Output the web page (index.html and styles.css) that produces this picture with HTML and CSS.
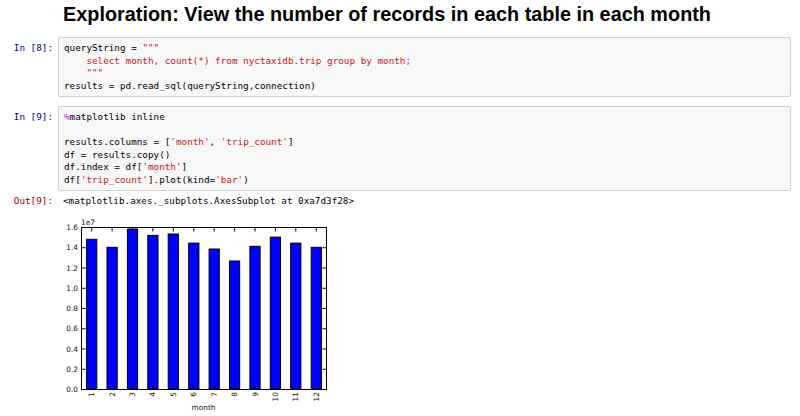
FILE: index.html
```html
<!DOCTYPE html>
<html>
<head>
<meta charset="utf-8">
<link rel="stylesheet" href="styles.css">
</head>
<body>
<div class="notebook">
  <div class="cell md">
    <div class="prompt"></div>
    <h2 class="title">Exploration: View the number of records in each table in each month</h2>
  </div>

  <div class="cell code">
    <div class="prompt in">In&nbsp;[8]:</div>
    <pre class="input">queryString = <span class="s">"""</span>
<span class="s">    select month, count(*) from nyctaxidb.trip group by month;</span>
<span class="s">    """</span>
results = pd.read_sql(queryString,connection)</pre>
  </div>

  <div class="cell code">
    <div class="prompt in">In&nbsp;[9]:</div>
    <pre class="input"><span class="m">%</span>matplotlib inline

results.columns = [<span class="s">'month'</span>, <span class="s">'trip_count'</span>]
df = results.copy()
df.index = df[<span class="s">'month'</span>]
df[<span class="s">'trip_count'</span>].plot(kind=<span class="s">'bar'</span>)</pre>
  </div>

  <div class="cell out">
    <div class="prompt outp">Out[9]:</div>
    <pre class="output">&lt;matplotlib.axes._subplots.AxesSubplot at 0xa7d3f28&gt;</pre>
  </div>

  <div class="cell fig">
    <div class="prompt"></div>
    <div class="figure">
      <svg width="300" height="206" viewBox="58 210 300 206" xmlns="http://www.w3.org/2000/svg">
        <g class="bars" fill="#0000ff" stroke="#000" stroke-width="1">
          <rect x="86.6" y="239.3" width="10.2" height="149.7"/>
          <rect x="107.0" y="247.3" width="10.2" height="141.7"/>
          <rect x="127.4" y="229.0" width="10.2" height="160.0"/>
          <rect x="147.8" y="235.4" width="10.2" height="153.6"/>
          <rect x="168.2" y="234.0" width="10.2" height="155.0"/>
          <rect x="188.7" y="243.1" width="10.2" height="145.9"/>
          <rect x="209.1" y="249.0" width="10.2" height="140.0"/>
          <rect x="229.5" y="261.0" width="10.2" height="128.0"/>
          <rect x="249.9" y="246.3" width="10.2" height="142.7"/>
          <rect x="270.3" y="237.1" width="10.2" height="151.9"/>
          <rect x="290.7" y="243.1" width="10.2" height="145.9"/>
          <rect x="311.2" y="247.3" width="10.2" height="141.7"/>
        </g>
        <rect x="81.5" y="227.5" width="245" height="162" fill="none" stroke="#000" stroke-width="1"/>
        <g class="ticks" stroke="#000" stroke-width="1">
          <path d="M81.5 389.5h4M81.5 369.25h4M81.5 349h4M81.5 328.75h4M81.5 308.5h4M81.5 288.25h4M81.5 268h4M81.5 247.75h4M81.5 227.5h4"/>
          <path d="M326.5 389.5h-4M326.5 369.25h-4M326.5 349h-4M326.5 328.75h-4M326.5 308.5h-4M326.5 288.25h-4M326.5 268h-4M326.5 247.75h-4M326.5 227.5h-4"/>
          <path d="M91.7 227.5v4M112.1 227.5v4M132.5 227.5v4M152.9 227.5v4M173.3 227.5v4M193.8 227.5v4M214.2 227.5v4M234.6 227.5v4M255.0 227.5v4M275.4 227.5v4M295.8 227.5v4M316.3 227.5v4"/>
          <path d="M91.7 389.5v-4M112.1 389.5v-4M132.5 389.5v-4M152.9 389.5v-4M173.3 389.5v-4M193.8 389.5v-4M214.2 389.5v-4M234.6 389.5v-4M255.0 389.5v-4M275.4 389.5v-4M295.8 389.5v-4M316.3 389.5v-4"/>
        </g>
        <g class="ylabels" text-anchor="end">
          <text x="78" y="392">0.0</text>
          <text x="78" y="371.75">0.2</text>
          <text x="78" y="351.5">0.4</text>
          <text x="78" y="331.25">0.6</text>
          <text x="78" y="311">0.8</text>
          <text x="78" y="290.75">1.0</text>
          <text x="78" y="270.5">1.2</text>
          <text x="78" y="250.25">1.4</text>
          <text x="78" y="230">1.6</text>
        </g>
        <text class="lbl" x="81" y="224.5">1e7</text>
        <g class="xlabels" text-anchor="end">
          <text transform="translate(94.2 392) rotate(-90)">1</text>
          <text transform="translate(114.6 392) rotate(-90)">2</text>
          <text transform="translate(135.0 392) rotate(-90)">3</text>
          <text transform="translate(155.4 392) rotate(-90)">4</text>
          <text transform="translate(175.8 392) rotate(-90)">5</text>
          <text transform="translate(196.3 392) rotate(-90)">6</text>
          <text transform="translate(216.7 392) rotate(-90)">7</text>
          <text transform="translate(237.1 392) rotate(-90)">8</text>
          <text transform="translate(257.5 392) rotate(-90)">9</text>
          <text transform="translate(277.9 392) rotate(-90)">10</text>
          <text transform="translate(298.3 392) rotate(-90)">11</text>
          <text transform="translate(318.8 392) rotate(-90)">12</text>
        </g>
        <text class="lbl" x="203.5" y="410" text-anchor="middle">month</text>
      </svg>
    </div>
  </div>
</div>
</body>
</html>
```

FILE: styles.css
```css
html, body {
  margin: 0;
  padding: 0;
  background: #fff;
}

.notebook {
  width: 800px;
}

.cell {
  display: flex;
  align-items: flex-start;
}

.prompt {
  width: 58px;
  flex: none;
  box-sizing: border-box;
  padding-right: 5px;
  text-align: right;
  font-family: "DejaVu Sans Mono", "Liberation Mono", monospace;
  font-size: 9.3px;
  line-height: 12.5px;
  white-space: nowrap;
}

.prompt.in {
  color: #000080;
  padding-top: 5px;
}

.prompt.outp {
  color: #8b0000;
}

.md {
  height: 37px;
}

.title {
  margin: 0;
  padding: 2px 0 0 5px;
  font-family: "Liberation Sans", Arial, sans-serif;
  font-weight: bold;
  font-size: 19.85px;
  line-height: 24px;
  color: #000;
}

.code {
  margin-bottom: 9px;
}

.input {
  flex: none;
  width: 733px;
  box-sizing: border-box;
  margin: 0;
  padding: 4px 5px;
  background: #f7f7f7;
  border: 1px solid #cfcfcf;
  border-radius: 2px;
  font-family: "DejaVu Sans Mono", "Liberation Mono", monospace;
  font-size: 9.3px;
  line-height: 12.5px;
  color: #000;
}

.input .s {
  color: #ba2121;
}

.input .m {
  color: #aa22ff;
}

.out {
  margin-top: -5px;
}

.output {
  margin: 0;
  padding-left: 5px;
  font-family: "DejaVu Sans Mono", "Liberation Mono", monospace;
  font-size: 9.3px;
  line-height: 12.5px;
  color: #000;
}

.fig {
  margin-top: 2px;
}

.figure svg {
  display: block;
}

.ylabels text,
.xlabels text,
.lbl {
  font-family: "DejaVu Sans", sans-serif;
  font-size: 7.4px;
  fill: #111;
}
```
